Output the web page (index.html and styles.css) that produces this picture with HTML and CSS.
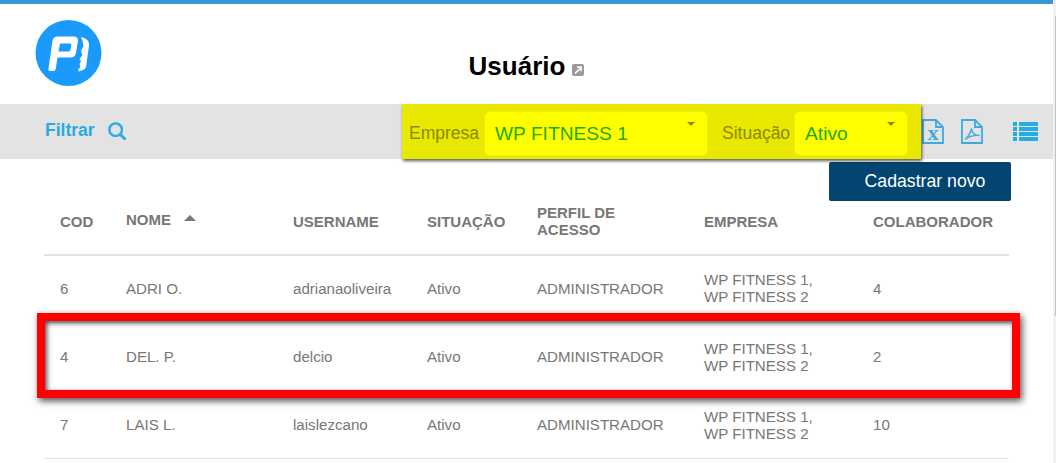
FILE: index.html
```html
<!DOCTYPE html>
<html lang="pt">
<head>
<meta charset="utf-8">
<title>Usuário</title>
<link rel="stylesheet" href="styles.css">
</head>
<body>
<div class="page">
  <main class="main">
    <div class="topbar"></div>
    <header class="header">
      <svg class="logo" viewBox="35 20 67 67" width="67" height="67" aria-label="Logo">
        <circle cx="68.500" cy="53" r="33" fill="#1a9bfc"/>
        <path fill="#fff" fill-rule="evenodd" d="M58 36.500H73.500Q78.500 36.500 78 41L76 52.500Q75.300 57.500 70.500 57.500H57.500L55.800 68.500Q55.500 71 53 71H50.500Q48 71 48.500 68.500L52.500 41Q53 36.500 58 36.500ZM60 43.500L58.500 51.500H68.500Q70 51.500 70.300 50L71.300 45Q71.500 43.500 70 43.500Z"/>
        <path fill="#fff" d="M81 37Q90 39 89 46L86 67Q85.500 69.500 79 71.500L78 69.500L80.500 67L79.500 64L81 61L79.500 59L82.500 55L81 51L83.500 46Q83 41 81 37Z"/>
      </svg>
      <h1 class="title">Usuário
        <svg class="external" viewBox="0 0 12 12" width="12" height="12" aria-hidden="true">
          <rect width="12" height="12" rx="2" fill="#9a9a9a"/>
          <path d="M3 9.500 8 4.500M5 3.200H9V7.200" fill="none" stroke="#fff" stroke-width="1.700"/>
        </svg>
      </h1>
    </header>

    <section class="toolbar">
      <a class="filter">Filtrar
        <svg viewBox="0 0 20 20" width="18" height="18" aria-hidden="true">
          <circle cx="8.500" cy="8.500" r="7" fill="none" stroke="#29abe2" stroke-width="2.600"/>
          <path d="M13.500 13.500 18.500 18.500" stroke="#29abe2" stroke-width="3.200" stroke-linecap="round"/>
        </svg>
      </a>
      <div class="highlight">
        <span class="hl-label hl-label-first">Empresa</span>
        <div class="select select-company">WP FITNESS 1<i class="caret"></i></div>
        <span class="hl-label hl-label-second">Situação</span>
        <div class="select select-status">Ativo<i class="caret"></i></div>
      </div>
      <div class="actions">
        <svg viewBox="0 0 22 25" width="22" height="25" aria-hidden="true">
          <path d="M1 1H14L21 8V24H1Z" fill="none" stroke="#3fa9e0" stroke-width="1.800"/>
          <path d="M14 1V8H21" fill="none" stroke="#3fa9e0" stroke-width="1.800"/>
          <text x="11" y="21" class="x-mark">x</text>
        </svg>
        <svg viewBox="0 0 22 25" width="22" height="25" aria-hidden="true">
          <path d="M1 1H14L21 8V24H1Z" fill="none" stroke="#3fa9e0" stroke-width="1.800"/>
          <path d="M14 1V8H21" fill="none" stroke="#3fa9e0" stroke-width="1.800"/>
          <path d="M4 20.500C7 18 9.500 14 10.500 9.500C11 14 14 16.500 18.500 16.500C14 16 9 17 4 20.500Z" fill="none" stroke="#3fa9e0" stroke-width="1.400"/>
        </svg>
        <svg class="list-icon" viewBox="0 0 25 19" width="25" height="19" aria-hidden="true">
          <path fill="#29abe2" d="M0 0H4V4H0ZM6 0H25V4H6ZM0 5H4V9H0ZM6 5H25V9H6ZM0 10H4V14H0ZM6 10H25V14H6ZM0 15H4V19H0ZM6 15H25V19H6Z"/>
        </svg>
      </div>
    </section>

    <div class="new-row"><button class="new-btn">Cadastrar novo</button></div>

    <table class="users">
      <colgroup>
        <col class="c1"><col class="c2"><col class="c3"><col class="c4"><col class="c5"><col class="c6"><col class="c7">
      </colgroup>
      <thead>
        <tr>
          <th>COD</th>
          <th class="sorted"><span>NOME</span><i class="sort"></i></th>
          <th>USERNAME</th>
          <th>SITUAÇÃO</th>
          <th>PERFIL DE<br>ACESSO</th>
          <th>EMPRESA</th>
          <th>COLABORADOR</th>
        </tr>
      </thead>
      <tbody>
        <tr class="first">
          <td>6</td><td>ADRI O.</td><td>adrianaoliveira</td><td>Ativo</td><td>ADMINISTRADOR</td><td>WP FITNESS 1,<br>WP FITNESS 2</td><td>4</td>
        </tr>
        <tr>
          <td>4</td><td>DEL. P.</td><td>delcio</td><td>Ativo</td><td>ADMINISTRADOR</td><td>WP FITNESS 1,<br>WP FITNESS 2</td><td>2</td>
        </tr>
        <tr>
          <td>7</td><td>LAIS L.</td><td>laislezcano</td><td>Ativo</td><td>ADMINISTRADOR</td><td>WP FITNESS 1,<br>WP FITNESS 2</td><td>10</td>
        </tr>
      </tbody>
    </table>

    <div class="red-frame"></div>
  </main>
  <div class="scrollbar"><div class="thumb"></div></div>
</div>
</body>
</html>
```
FILE: styles.css
```css
* { box-sizing: border-box; }
html, body { margin: 0; height: 463px; overflow: hidden; background: #fff; }
body { font-family: "Liberation Sans", Arial, sans-serif; color: #777; }

.page { display: flex; height: 463px; overflow: hidden; }
.main { position: relative; flex: 1; min-width: 0; }

.topbar { height: 4px; background: #3498d3; }

.header { position: relative; height: 100px; display: flex; justify-content: center; }
.logo { position: absolute; left: 35px; top: 16px; }
.title {
  margin: 47px 0 0;
  font-size: 26px;
  line-height: 30px;
  font-weight: 700;
  color: #000;
  display: flex;
  align-items: flex-start;
  gap: 7px;
}
.external { margin-top: 13px; }

.toolbar { height: 55px; background: #e3e3e3; display: flex; align-items: center; }
.filter {
  margin: -2px 0 0 45px;
  display: flex;
  align-items: center;
  gap: 13px;
  width: 357px;
  font-size: 17.500px;
  font-weight: 700;
  color: #29abe2;
}
.highlight {
  flex: none;
  width: 519px;
  height: 55px;
  background: #e8e800;
  box-shadow: 1px 2px 3px rgba(0, 0, 0, 0.65);
  display: flex;
  align-items: center;
  position: relative;
  padding: 8px 14px 4px 7px;
}
.hl-label { font-size: 17.500px; color: #8a8a00; line-height: 43px; }
.hl-label-first { width: 76px; }
.hl-label-second { margin-left: 15px; width: 73px; }
.select {
  position: relative;
  height: 43px;
  line-height: 43px;
  font-size: 19.200px;
  color: #24a80e;
  background: #ffff00;
  border-radius: 5px;
  box-shadow: 0 0 0 1px #f0f000;
  padding-left: 10px;
  flex: none;
}
.select-company { width: 222px; }
.select-status { width: 112px; }
.caret {
  position: absolute;
  right: 12px;
  top: 10px;
  border-left: 4px solid transparent;
  border-right: 4px solid transparent;
  border-top: 4px solid #8a8a00;
}
.x-mark {
  font-family: "Liberation Serif", serif;
  font-weight: 700;
  font-size: 22px;
  fill: #3fa9e0;
  text-anchor: middle;
}
.actions { display: flex; align-items: center; margin-left: 1px; gap: 17px; }
.list-icon { margin: -1px 0 0 13px; }

.new-row { display: flex; justify-content: flex-end; padding: 3px 42px 0 0; }
.new-btn {
  width: 182px;
  height: 39px;
  border: 0;
  border-radius: 2px;
  padding: 0 0 0 10px;
  background: #024571;
  color: #fff;
  font: 17.700px "Liberation Sans", Arial, sans-serif;
}

.users {
  margin: 1px 0 0 44px;
  width: 965px;
  border-collapse: separate;
  border-spacing: 0;
  table-layout: fixed;
  font-size: 15.100px;
}
.c1 { width: 66px; }
.c2 { width: 167px; }
.c3 { width: 134px; }
.c4 { width: 110px; }
.c5 { width: 167px; }
.c6 { width: 169px; }
.c7 { width: 152px; }

th, td { padding: 0 0 0 16px; text-align: left; }
th {
  height: 54px;
  padding-bottom: 14px;
  border-bottom: 2px solid #dde6e8;
  font-size: 15px;
  line-height: 17px;
  font-weight: 700;
  color: #777;
}
.sorted span { position: relative; top: -2px; }
.sort {
  display: inline-block;
  margin-left: 13px;
  vertical-align: 6px;
  border-left: 6px solid transparent;
  border-right: 6px solid transparent;
  border-bottom: 6px solid #777;
}
td {
  height: 68px;
  line-height: 17px;
  color: #777;
  border-bottom: 1px solid #dde6e8;
}
.first td { height: 67px; padding-bottom: 2px; }

.red-frame {
  position: absolute;
  left: 37px;
  top: 313px;
  width: 983px;
  height: 85px;
  border: 8.500px solid #f00;
  box-shadow: 2px 3px 7px rgba(0, 0, 0, 0.7), inset 2px 2px 5px rgba(0, 0, 0, 0.7);
  pointer-events: none;
}

.scrollbar { flex: none; width: 3px; background: #f1f1f1; padding: 16px 0 0 2px; }
.thumb { height: 300px; background: #c1c1c1; }
```
